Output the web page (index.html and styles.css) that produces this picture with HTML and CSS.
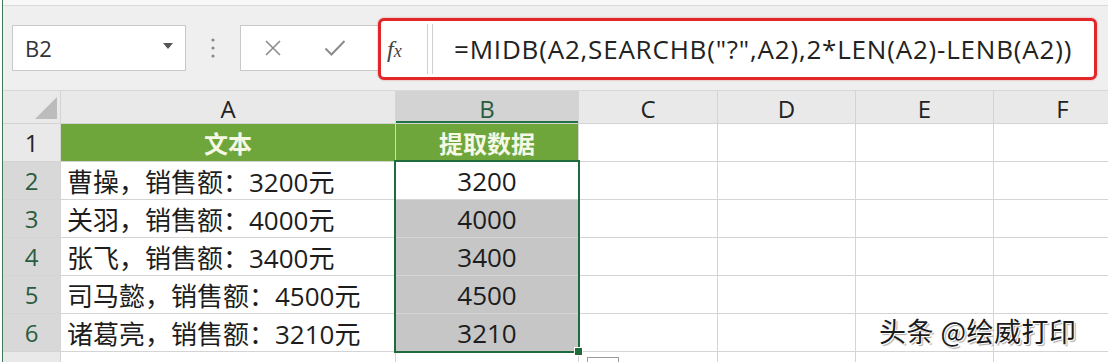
FILE: index.html
```html
<!DOCTYPE html>
<html lang="zh-CN">
  <head>
    <meta charset="utf-8" />
    <title>MIDB 提取数据</title>
    <link rel="stylesheet" href="styles.css">
  </head>
  <body>
    <div class="app">
      <div class="title-strip"></div>
      <div class="formula-bar">
        <div class="name-box">
          <span>B2</span>
          <svg class="caret" width="10" height="6" viewBox="0 0 10 6"><path d="M0 0 H10 L5 6 Z" fill="#555"/></svg>
        </div>
        <div class="grip">
          <svg width="4" height="22" viewBox="0 0 4 22"><circle cx="2" cy="3" r="1.6" fill="#8a8a8a"/><circle cx="2" cy="11" r="1.6" fill="#8a8a8a"/><circle cx="2" cy="19" r="1.6" fill="#8a8a8a"/></svg>
        </div>
        <div class="edit-box">
          <svg width="18" height="18" viewBox="0 0 18 18"><path d="M2 2 L16 16 M16 2 L2 16" stroke="#8c8c8c" stroke-width="1.6" fill="none"/></svg>
          <svg width="22" height="18" viewBox="0 0 22 18"><path d="M1.5 9.5 L7.5 15.5 L20.5 2" stroke="#8c8c8c" stroke-width="2" fill="none"/></svg>
        </div>
        <div class="fx-frame">
          <div class="fx">f<span>x</span></div>
          <div class="formula">=MIDB(A2,SEARCHB("?",A2),2*LEN(A2)-LENB(A2))</div>
        </div>
      </div>

      <div class="sheet">
        <div class="corner"><svg width="22" height="22" viewBox="0 0 22 22"><path d="M22 0 V22 H0 Z" fill="#bcbcbc"/></svg></div>
        <div class="col-head">A</div>
        <div class="col-head active">B</div>
        <div class="col-head">C</div>
        <div class="col-head">D</div>
        <div class="col-head">E</div>
        <div class="col-head">F</div>

        <div class="row-head">1</div>
        <div class="cell title">文本</div>
        <div class="cell title">提取数据</div>
        <div class="cell"></div><div class="cell"></div><div class="cell"></div><div class="cell"></div>

        <div class="row-head active">2</div>
        <div class="cell text">曹操，销售额：3200元</div>
        <div class="cell num">3200</div>
        <div class="cell"></div><div class="cell"></div><div class="cell"></div><div class="cell"></div>

        <div class="row-head active">3</div>
        <div class="cell text">关羽，销售额：4000元</div>
        <div class="cell num picked">4000</div>
        <div class="cell"></div><div class="cell"></div><div class="cell"></div><div class="cell"></div>

        <div class="row-head active">4</div>
        <div class="cell text">张飞，销售额：3400元</div>
        <div class="cell num picked">3400</div>
        <div class="cell"></div><div class="cell"></div><div class="cell"></div><div class="cell"></div>

        <div class="row-head active">5</div>
        <div class="cell text">司马懿，销售额：4500元</div>
        <div class="cell num picked">4500</div>
        <div class="cell"></div><div class="cell"></div><div class="cell"></div><div class="cell"></div>

        <div class="row-head active">6</div>
        <div class="cell text">诸葛亮，销售额：3210元</div>
        <div class="cell num picked">3210</div>
        <div class="cell"></div><div class="cell"></div><div class="cell"></div><div class="cell"></div>

        <div class="row-head"></div>
        <div class="cell"></div><div class="cell"></div><div class="cell"></div><div class="cell"></div><div class="cell"></div><div class="cell"></div>

        <div class="selection"><span class="handle"></span></div>
        <div class="paste-tag"></div>
        <div class="watermark">头条 @绘威打印</div>
      </div>
    </div>
  </body>
</html>
```

FILE: styles.css
```css
html, body {
  margin: 0;
  height: 100%;
  overflow: hidden;
  background: #ffffff;
}
body {
  font-family: "Open Sans", "Noto Sans CJK SC", sans-serif;
  color: #222;
}
.app {
  margin-left: 2px;
  border-left: 1px solid #3d7a55;
  height: 100%;
  background: #efefef;
}

/* formula bar */
.title-strip {
  height: 5px;
  background: #f7f7f7;
  border-bottom: 1px solid #dadada;
}
.formula-bar {
  height: 84px;
  display: flex;
  align-items: center;
}
.name-box {
  margin-left: 9px;
  width: 174px;
  height: 46px;
  box-sizing: border-box;
  background: #fff;
  border: 1px solid #c9c9c9;
  display: flex;
  align-items: center;
  justify-content: space-between;
  padding: 0 12px 0 12px;
  font-size: 22px;
  color: #333;
}
.caret {
  margin-top: -4px;
}
.grip {
  width: 54px;
  display: flex;
  justify-content: center;
}
.edit-box {
  width: 138px;
  height: 46px;
  box-sizing: border-box;
  background: #fff;
  border: 1px solid #c9c9c9;
  border-right: none;
  display: flex;
  align-items: center;
  gap: 42px;
  padding-left: 23px;
}
.fx-frame {
  width: 719px;
  height: 62px;
  margin-top: 2px;
  box-sizing: border-box;
  border: 3px solid #e3262a;
  border-radius: 6px;
  background: #fff;
  display: flex;
  align-items: stretch;
  padding: 3px 3px 3px 0;
  box-shadow: 0 0 2px rgba(220, 40, 40, 0.5);
}
.fx {
  width: 47px;
  box-sizing: border-box;
  border-right: 1px solid #cfcfcf;
  font-family: "Liberation Serif", serif;
  font-style: italic;
  font-size: 24px;
  color: #444;
  display: flex;
  align-items: center;
  padding-left: 6px;
}
.fx span {
  font-size: 18px;
  margin-top: 5px;
}
.formula {
  flex: 1;
  border-left: 1px solid #cfcfcf;
  margin-left: 4px;
  display: flex;
  align-items: center;
  padding-left: 21px;
  font-family: "Open Sans", sans-serif;
  font-size: 26px;
  letter-spacing: 0.8px;
  color: #222;
}

/* sheet grid */
.sheet {
  display: grid;
  grid-template-columns: 57px 334px 182px 138px 137px 137px 137px;
  grid-template-rows: 32px repeat(6, 37px) 20px;
  gap: 1px;
  background: #d4d4d4;
  border-top: 1px solid #d8d8d8;
  position: relative;
}
.corner,
.col-head,
.row-head {
  background: #e9e9e9;
  display: flex;
  align-items: center;
  justify-content: center;
  font-size: 24px;
  color: #222;
}
.corner {
  justify-content: flex-end;
  align-items: flex-end;
  padding: 0 3px 4px 0;
}
.col-head {
  padding-top: 2px;
}
.col-head.active {
  background: #d3d3d3;
  color: #2a5c3f;
  box-shadow: inset 0 -2px 0 #217346;
}
.row-head.active {
  background: #d8d8d8;
  color: #2a5c3f;
}
.cell {
  background: #fff;
  display: flex;
  align-items: center;
  font-size: 26px;
  color: #1d1d1d;
}
.cell.title {
  background: #6ea63c;
  color: #f4f8e4;
  font-weight: bold;
  justify-content: center;
  font-size: 24px;
  font-family: "Noto Sans CJK SC", sans-serif;
}
.cell.text {
  padding-left: 6px;
  font-family: "Open Sans", "Noto Sans CJK SC", sans-serif;
}
.cell.num {
  justify-content: center;
  font-size: 26px;
}
.cell.picked {
  background: #c6c6c6;
}

/* overlays on top of the grid */
.selection {
  position: absolute;
  left: 391px;
  top: 69px;
  width: 186px;
  height: 193px;
  box-sizing: border-box;
  border: 2px solid #1f6b3e;
  pointer-events: none;
}
.handle {
  position: absolute;
  right: -5px;
  bottom: -5px;
  width: 7px;
  height: 7px;
  background: #1f6b3e;
  border: 1px solid #fff;
}
.paste-tag {
  position: absolute;
  left: 584px;
  top: 266px;
  width: 30px;
  height: 12px;
  background: #fff;
  border: 1px solid #9a9a9a;
  border-bottom: none;
}
.watermark {
  position: absolute;
  left: 876px;
  top: 220px;
  font-family: "Noto Sans CJK SC", sans-serif;
  font-size: 27px;
  color: #1b1b1b;
  letter-spacing: 0.5px;
  text-shadow: 1px 1px 0 #fff, -1px -1px 0 #fff, 2px 2px 1px #aaa;
}
```
